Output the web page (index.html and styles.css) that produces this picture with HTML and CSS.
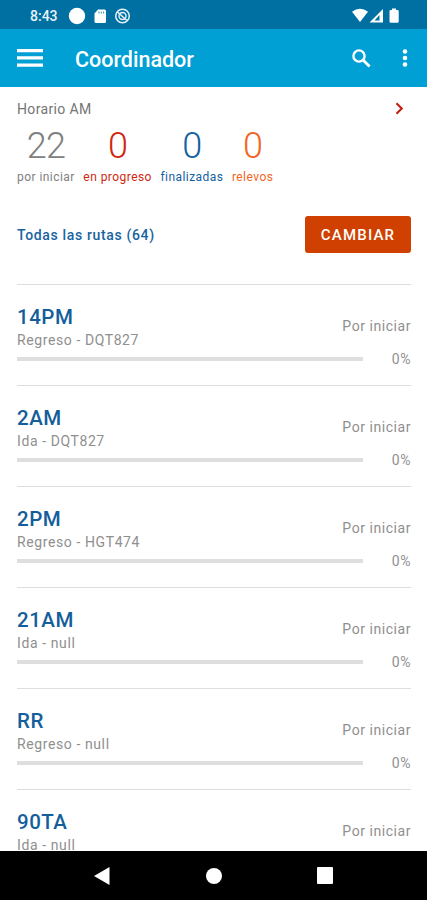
FILE: index.html
```html
<!DOCTYPE html>
<html lang="es">
<head>
    <meta charset="UTF-8">
    <meta name="viewport" content="width=device-width, initial-scale=1.0">
    <title>Coordinador</title>
    <link rel="stylesheet" href="styles.css">
</head>
<body>
    <div class="status-bar">
        <span class="clock">8:43</span>
        <svg class="status-left" width="64" height="18" viewBox="0 0 64 18" fill="#fff">
            <circle cx="9" cy="9" r="8.2"/>
            <path d="M30 2.5h6.5q1.5 0 1.5 1.5v10.500q0 1.500-1.500 1.500h-8.500q-1.500 0-1.500-1.500V6.500z"/>
            <path d="M31 4.500v2M33.300 4.500v2M35.600 4.500v2" stroke="#006fa1" stroke-width="0.8"/>
            <circle cx="54.500" cy="9" r="6.800" fill="none" stroke="#e5f3f9" stroke-width="1.500"/>
            <circle cx="54.500" cy="9" r="3.500" fill="none" stroke="#e5f3f9" stroke-width="1.400"/>
            <path d="M49.500 5l9.500 8.500" stroke="#e5f3f9" stroke-width="1.500"/>
        </svg>
        <svg class="status-right" width="50" height="18" viewBox="0 0 50 18" fill="#fff">
            <path d="M1 4.800Q9 -1.500 17 4.800L9 15z"/>
            <path d="M18.500 15.500L32 2v13.500z"/>
            <path d="M23.500 13.500l5-5.500v5.500z" fill="#006fa1"/>
            <path d="M39 3h2V1.500h4V3h1.500q1.200 0 1.200 1.200v10.300q0 1.200-1.200 1.200h-6.800q-1.200 0-1.200-1.200V4.200q0-1.200 1.200-1.200z"/>
        </svg>
    </div>

    <header class="app-bar">
        <svg class="menu-icon" width="26" height="18" viewBox="0 0 26 18" fill="#fff">
            <path d="M0 0h26v3.200H0zM0 7.300h26v3.200H0zM0 14.600h26v3.200H0z"/>
        </svg>
        <h1>Coordinador</h1>
        <svg class="search-icon" width="19" height="19" viewBox="0 0 19 19" fill="none" stroke="#fff">
            <circle cx="7" cy="7" r="5.600" stroke-width="2.400"/>
            <path d="M11 11l6.600 6.600" stroke-width="2.800"/>
        </svg>
        <svg class="more-icon" width="6" height="18" viewBox="0 0 6 18" fill="#fff">
            <circle cx="3" cy="2.500" r="2.300"/>
            <circle cx="3" cy="9" r="2.300"/>
            <circle cx="3" cy="15.500" r="2.300"/>
        </svg>
    </header>

    <main class="content">
        <section class="summary">
            <div class="schedule">
                <span>Horario AM</span>
                <svg width="9" height="14" viewBox="0 0 9 14" fill="none" stroke="#c41c0c" stroke-width="2">
                    <path d="M1.500 1.200L6.800 6.500l-5.300 5.300"/>
                </svg>
            </div>
            <div class="stats">
                <div class="stat pending"><b>22</b><span>por iniciar</span></div>
                <div class="stat progress"><b>0</b><span>en progreso</span></div>
                <div class="stat done"><b>0</b><span>finalizadas</span></div>
                <div class="stat relief"><b>0</b><span>relevos</span></div>
            </div>
        </section>

        <div class="filter">
            <span class="filter-label">Todas las rutas (64)</span>
            <button class="change-button">CAMBIAR</button>
        </div>

        <div class="routes">
            <div class="route">
                <div class="info">
                    <div><h2>14PM</h2><p>Regreso - DQT827</p></div>
                    <span class="state">Por iniciar</span>
                </div>
                <div class="advance"><div class="bar"></div><span>0%</span></div>
            </div>
            <div class="route">
                <div class="info">
                    <div><h2>2AM</h2><p>Ida - DQT827</p></div>
                    <span class="state">Por iniciar</span>
                </div>
                <div class="advance"><div class="bar"></div><span>0%</span></div>
            </div>
            <div class="route">
                <div class="info">
                    <div><h2>2PM</h2><p>Regreso - HGT474</p></div>
                    <span class="state">Por iniciar</span>
                </div>
                <div class="advance"><div class="bar"></div><span>0%</span></div>
            </div>
            <div class="route">
                <div class="info">
                    <div><h2>21AM</h2><p>Ida - null</p></div>
                    <span class="state">Por iniciar</span>
                </div>
                <div class="advance"><div class="bar"></div><span>0%</span></div>
            </div>
            <div class="route">
                <div class="info">
                    <div><h2>RR</h2><p>Regreso - null</p></div>
                    <span class="state">Por iniciar</span>
                </div>
                <div class="advance"><div class="bar"></div><span>0%</span></div>
            </div>
            <div class="route">
                <div class="info">
                    <div><h2>90TA</h2><p>Ida - null</p></div>
                    <span class="state">Por iniciar</span>
                </div>
            </div>
        </div>
    </main>

    <nav class="nav-bar">
        <svg width="16" height="18" viewBox="0 0 16 18" fill="#fff"><path d="M0 9L15.500 0v18z"/></svg>
        <svg width="16" height="16" viewBox="0 0 16 16" fill="#fff"><circle cx="8" cy="8" r="8"/></svg>
        <svg width="16" height="17" viewBox="0 0 16 17" fill="#fff"><rect width="16" height="17" rx="1"/></svg>
    </nav>
</body>
</html>
```
FILE: styles.css
```css
* {
    box-sizing: border-box;
}
body {
    font-family: Roboto, sans-serif;
    background-color: #fff;
    margin: 0;
    height: 900px;
    display: flex;
    flex-direction: column;
    overflow: hidden;
}
h1, h2, p {
    margin: 0;
}
svg {
    display: block;
    flex: none;
}
.status-bar {
    height: 29px;
    flex: none;
    display: flex;
    align-items: center;
    padding: 3px 26px 0 30px;
    background-color: #006fa1;
    color: #e5f3f9;
}
.clock {
    width: 38px;
    font-size: 14px;
    font-weight: 500;
}
.status-right {
    margin-left: auto;
}
.app-bar {
    height: 58px;
    flex: none;
    display: flex;
    align-items: center;
    padding: 0 19px 0 17px;
    background-color: #009fd4;
    color: #fff;
}
.app-bar h1 {
    margin-left: 32px;
    padding-top: 2px;
    font-size: 21.5px;
    font-weight: 500;
}
.search-icon {
    margin-left: auto;
}
.more-icon {
    margin-left: 31px;
}
.content {
    flex: 1;
    min-height: 0;
    overflow: hidden;
    padding: 0 16px 0 17px;
}
.summary {
    height: 113px;
    padding-top: 14px;
}
.schedule {
    height: 16px;
    display: flex;
    align-items: center;
    justify-content: space-between;
    padding-right: 7px;
    color: #757575;
    font-size: 14px;
    letter-spacing: 0.35px;
}
.stats {
    display: flex;
    gap: 8.5px;
    margin-top: 8px;
}
.stat {
    display: flex;
    flex-direction: column;
    align-items: center;
}
.stat b {
    font-size: 36px;
    line-height: 42px;
    font-weight: 300;
    letter-spacing: -0.7px;
}
.stat span {
    font-size: 12px;
    line-height: 14px;
    margin-top: 3px;
    letter-spacing: 0.45px;
}
.pending {
    color: #808080;
}
.progress {
    color: #d2260f;
}
.done {
    color: #1261a0;
}
.relief {
    color: #f26522;
}
.filter {
    height: 84px;
    display: flex;
    justify-content: space-between;
    align-items: flex-start;
    padding-top: 16px;
}
.filter-label {
    line-height: 38px;
    color: #1764a0;
    font-size: 14px;
    font-weight: 500;
    letter-spacing: 0.65px;
}
.change-button {
    width: 106px;
    height: 37px;
    padding: 0;
    border: none;
    border-radius: 3px;
    background-color: #d04000;
    color: #fff;
    font-family: inherit;
    font-size: 15px;
    font-weight: 500;
    letter-spacing: 1.2px;
}
.route {
    height: 101px;
    padding-top: 20px;
    border-top: 1px solid #dedede;
}
.info {
    display: flex;
    justify-content: space-between;
    align-items: flex-start;
    height: 44px;
}
.info h2 {
    color: #135e9b;
    font-size: 20.5px;
    line-height: 24px;
    font-weight: 500;
    letter-spacing: 0.5px;
}
.info p, .state, .advance {
    color: #8f8f8f;
    font-size: 14px;
    letter-spacing: 0.55px;
}
.info p {
    line-height: 22px;
    letter-spacing: 0.6px;
}
.state {
    line-height: 20px;
    margin-top: 11px;
}
.advance {
    display: flex;
    align-items: center;
    justify-content: space-between;
    height: 20px;
}
.bar {
    width: 346px;
    height: 4px;
    background-color: #dedede;
}
.nav-bar {
    height: 49px;
    flex: none;
    display: flex;
    align-items: center;
    justify-content: space-between;
    padding: 0 94px;
    background-color: #000;
}
```
